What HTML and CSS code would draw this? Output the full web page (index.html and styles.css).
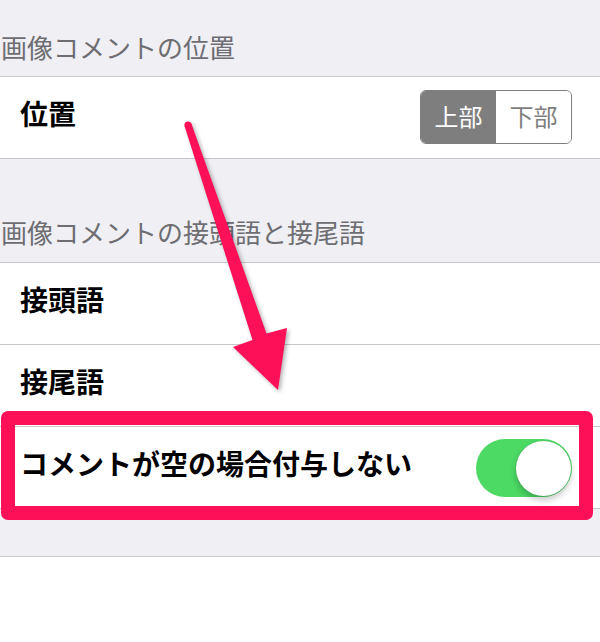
FILE: index.html
```html
<!DOCTYPE html>
<html lang="ja">
<head>
<meta charset="utf-8">
<title>画像コメント設定</title>
<link rel="stylesheet" href="styles.css">
</head>
<body>
<div class="screen">
  <div class="section-header first">画像コメントの位置</div>
  <div class="group">
    <div class="cell">
      <span class="label">位置</span>
      <div class="segmented">
        <span class="seg active">上部</span>
        <span class="seg">下部</span>
      </div>
    </div>
  </div>

  <div class="section-header second">画像コメントの接頭語と接尾語</div>
  <div class="group">
    <div class="cell"><span class="label">接頭語</span></div>
    <div class="cell"><span class="label">接尾語</span></div>
    <div class="cell">
      <span class="label">コメントが空の場合付与しない</span>
      <div class="switch on"><span class="knob"></span></div>
    </div>
  </div>

  <div class="spacer"></div>
  <div class="group tail"></div>

  <!-- annotation overlay -->
  <div class="highlight"></div>
  <svg class="arrow" width="600" height="642" viewBox="0 0 600 642">
    <circle cx="188" cy="125" r="3.6" fill="#fe1058"/>
    <polygon fill="#fe1058"
      points="184.6,126.2 252.5,340 233,347 278,390 287,328 266.5,333.5 191.4,123.8"/>
  </svg>
</div>
</body>
</html>
```

FILE: styles.css
```css
* {
  box-sizing: border-box;
}

html, body {
  margin: 0;
  padding: 0;
  background: #ffffff;
}

body {
  font-family: "Noto Sans CJK JP", "Noto Sans", sans-serif;
  width: 600px;
  height: 642px;
  overflow: hidden;
}

.screen {
  position: relative;
  width: 600px;
  height: 642px;
  background: #ffffff;
}

.section-header {
  background: #efeff4;
  color: #6d6d72;
  font-size: 26px;
  line-height: 30px;
  padding-left: 1px;
  border-bottom: 1px solid #c8c7cc;
  white-space: nowrap;
}

.section-header.first {
  height: 77px;
  padding-top: 32px;
}

.section-header.second {
  height: 104px;
  padding-top: 58px;
}

.group {
  background: #ffffff;
}

.cell {
  height: 82px;
  display: flex;
  align-items: center;
  justify-content: space-between;
  padding: 0 28px 0 20px;
  border-bottom: 1px solid #c8c7cc;
}

.label {
  font-size: 28px;
  font-weight: 700;
  color: #000000;
  line-height: 1;
  white-space: nowrap;
  margin-bottom: 9px;
}

/* segmented control */
.segmented {
  display: flex;
  width: 152px;
  height: 54px;
  border: 1.5px solid #7e7e7e;
  border-radius: 6px;
  overflow: hidden;
  margin-bottom: 2px;
}

.seg {
  flex: 1;
  display: flex;
  align-items: center;
  justify-content: center;
  font-size: 24px;
  color: #7e7e7e;
  background: #ffffff;
  padding-bottom: 2px;
}

.seg.active {
  background: #7e7e7e;
  color: #ffffff;
}

/* toggle switch */
.switch {
  position: relative;
  width: 96px;
  height: 58px;
  border-radius: 29px;
  background: #4cd964;
}

.switch .knob {
  position: absolute;
  right: 1px;
  top: 2px;
  width: 55px;
  height: 55px;
  border-radius: 50%;
  background: #ffffff;
  box-shadow: 0 4px 6px rgba(0, 0, 0, 0.22), 0 0 1px rgba(0, 0, 0, 0.25);
}

.spacer {
  height: 48px;
  background: #efeff4;
  border-bottom: 1px solid #c8c7cc;
}

.group.tail {
  height: 100px;
}

/* annotation */
.highlight {
  position: absolute;
  left: 1px;
  top: 411px;
  width: 592px;
  height: 109px;
  border: 14px solid #fe1058;
  border-radius: 7px;
}

.arrow {
  position: absolute;
  left: 0;
  top: 0;
  filter: drop-shadow(2px 2px 2px rgba(0, 0, 0, 0.3));
}
```
